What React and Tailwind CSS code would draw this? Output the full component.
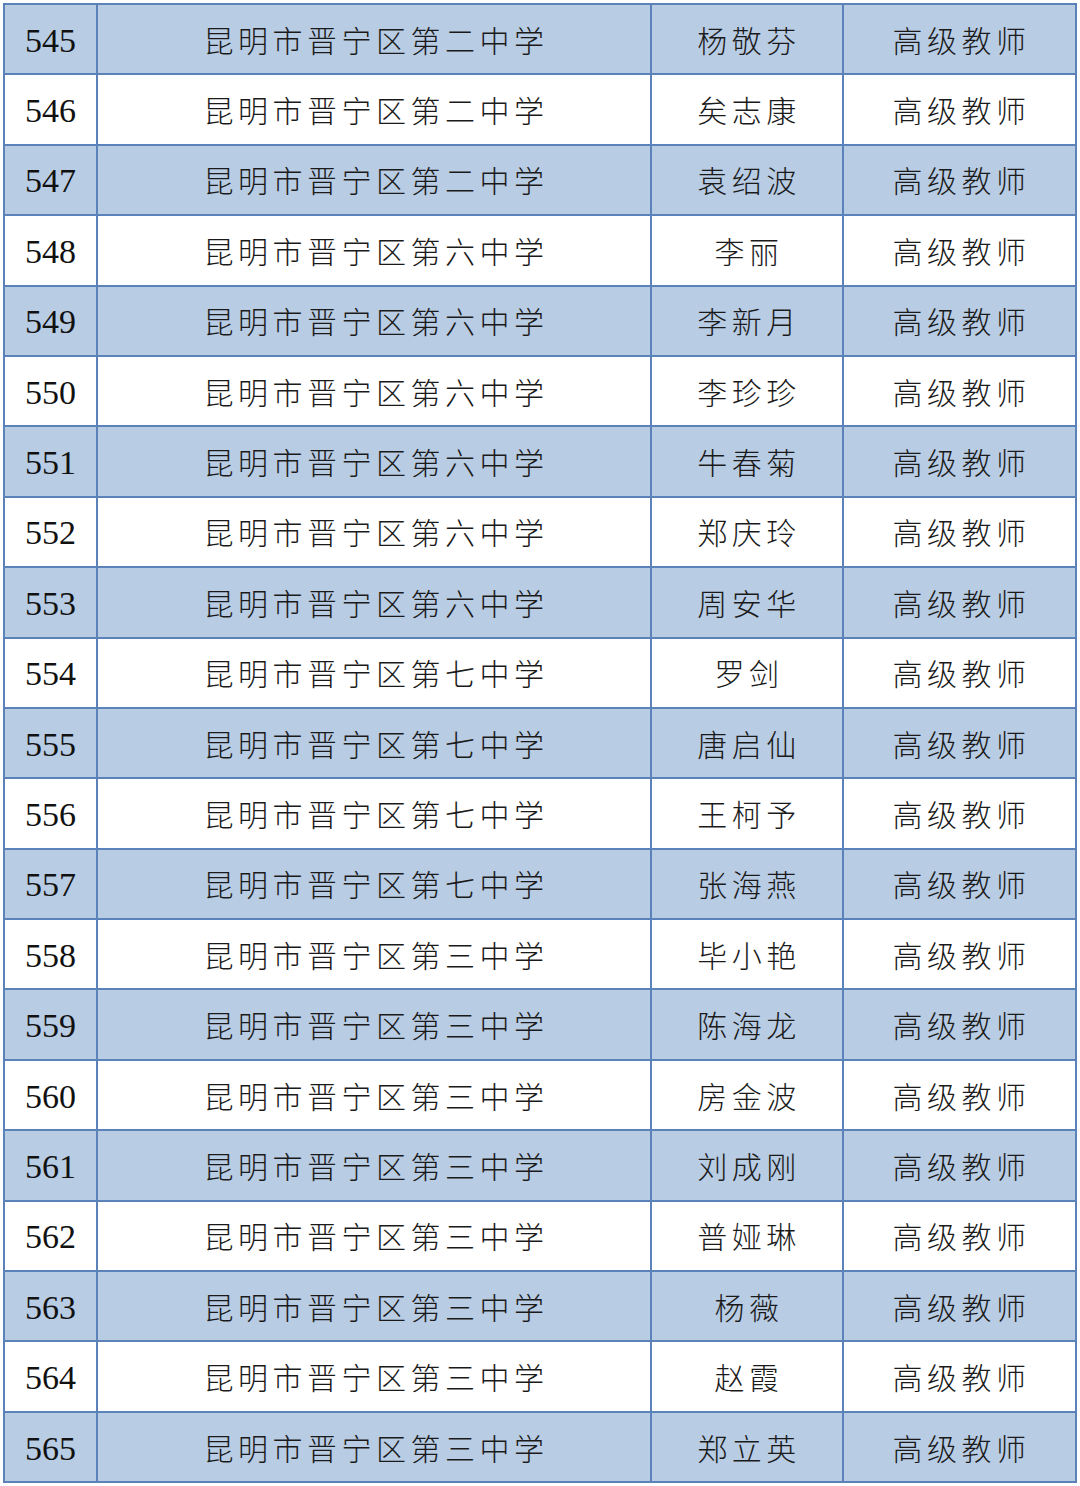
import React from 'react';

const rows = [
  ["545", "昆明市晋宁区第二中学", "杨敬芬"],
  ["546", "昆明市晋宁区第二中学", "矣志康"],
  ["547", "昆明市晋宁区第二中学", "袁绍波"],
  ["548", "昆明市晋宁区第六中学", "李丽"],
  ["549", "昆明市晋宁区第六中学", "李新月"],
  ["550", "昆明市晋宁区第六中学", "李珍珍"],
  ["551", "昆明市晋宁区第六中学", "牛春菊"],
  ["552", "昆明市晋宁区第六中学", "郑庆玲"],
  ["553", "昆明市晋宁区第六中学", "周安华"],
  ["554", "昆明市晋宁区第七中学", "罗剑"],
  ["555", "昆明市晋宁区第七中学", "唐启仙"],
  ["556", "昆明市晋宁区第七中学", "王柯予"],
  ["557", "昆明市晋宁区第七中学", "张海燕"],
  ["558", "昆明市晋宁区第三中学", "毕小艳"],
  ["559", "昆明市晋宁区第三中学", "陈海龙"],
  ["560", "昆明市晋宁区第三中学", "房金波"],
  ["561", "昆明市晋宁区第三中学", "刘成刚"],
  ["562", "昆明市晋宁区第三中学", "普娅琳"],
  ["563", "昆明市晋宁区第三中学", "杨薇"],
  ["564", "昆明市晋宁区第三中学", "赵霞"],
  ["565", "昆明市晋宁区第三中学", "郑立英"],
];

const cjk = "font-['Noto_Sans_CJK_SC',sans-serif] font-light text-[30px] tracking-[4.5px] text-[#1a1a1a]";

export default function App() {
  return (
    <div className="w-[1080px] h-[1486px] bg-white pt-[3px] pl-[3px]">
      <table className="border-collapse w-[1074px]">
        <tbody>
          {rows.map((r, i) => (
            <tr
              key={r[0]}
              className={`h-[70.4px] ${i % 2 === 0 ? "bg-[#b8cce4]" : "bg-white"}`}
            >
              <td className="w-[93px] border-2 border-[#5b83b9] text-center font-['Liberation_Serif',serif] text-[34px] text-[#111] pt-[2px]">
                {r[0]}
              </td>
              <td className={`w-[554px] border-2 border-[#5b83b9] text-center ${cjk}`}>
                <span className="pl-[4px]">{r[1]}</span>
              </td>
              <td className={`w-[192px] border-2 border-[#5b83b9] text-center ${cjk}`}>
                <span className="pl-[4px]">{r[2]}</span>
              </td>
              <td className={`border-2 border-[#5b83b9] text-center ${cjk}`}>
                <span className="pl-[4px]">高级教师</span>
              </td>
            </tr>
          ))}
        </tbody>
      </table>
    </div>
  );
}
